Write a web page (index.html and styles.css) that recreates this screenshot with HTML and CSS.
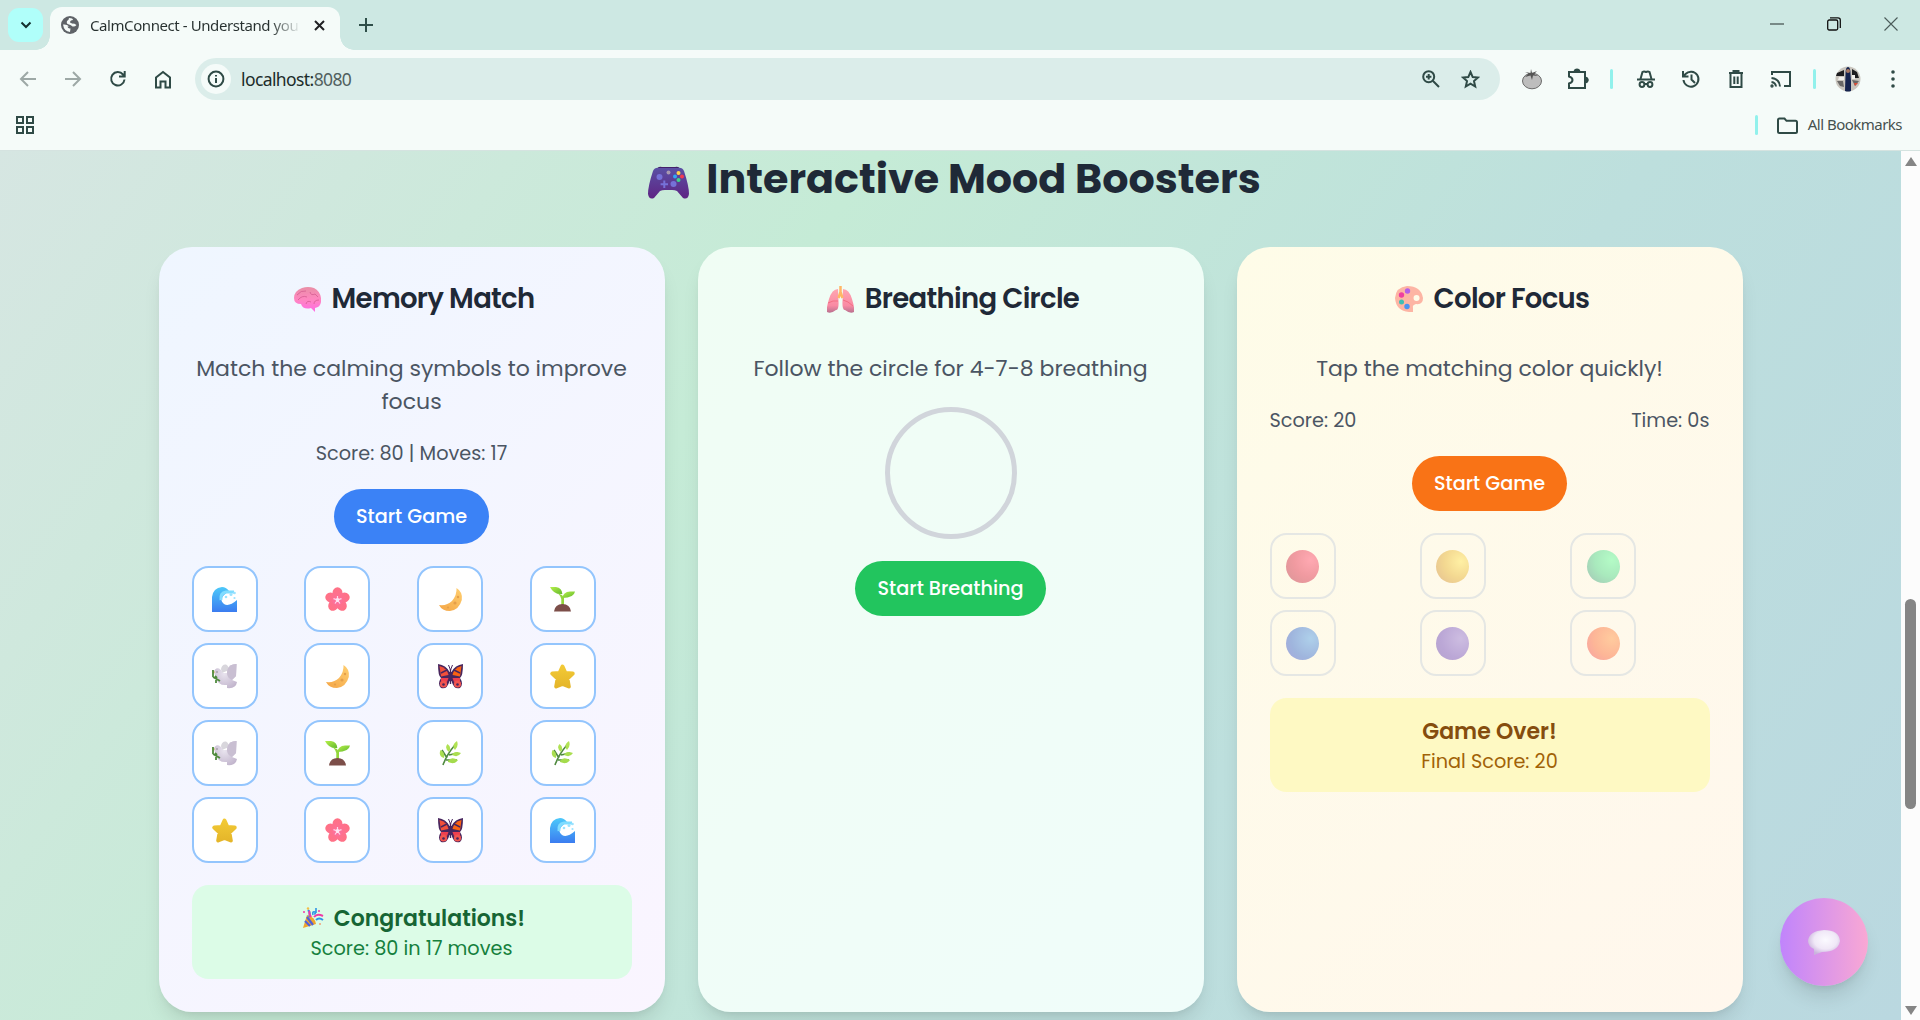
FILE: index.html
```html
<!DOCTYPE html>
<html lang="en">
<head>
<meta charset="utf-8">
<title>CalmConnect - Understand your mind</title>
<link rel="stylesheet" href="styles.css">
</head>
<body>
<svg class="defs" width="0" height="0" aria-hidden="true">
  <defs>
    <linearGradient id="gWave" x1="0" y1="0" x2="0" y2="1"><stop offset="0" stop-color="#4cc9fa"/><stop offset="1" stop-color="#3b7cf0"/></linearGradient>
    <linearGradient id="gFlower" gradientUnits="userSpaceOnUse" x1="0" y1="0" x2="0" y2="25"><stop offset="0" stop-color="#ff7184"/><stop offset="1" stop-color="#fb6fa8"/></linearGradient>
    <linearGradient id="gMoon" x1="1" y1="0" x2="0.2" y2="1"><stop offset="0" stop-color="#ffcf70"/><stop offset="1" stop-color="#f5a94a"/></linearGradient>
    <linearGradient id="gLeaf" x1="0" y1="0" x2="1" y2="1"><stop offset="0" stop-color="#b6f04b"/><stop offset="1" stop-color="#62b82c"/></linearGradient>
    <linearGradient id="gHerb" x1="0" y1="0" x2="0" y2="1"><stop offset="0" stop-color="#b4e455"/><stop offset="1" stop-color="#a3da4c"/></linearGradient>
    <radialGradient id="gDove" cx="0.45" cy="0.4" r="0.7"><stop offset="0" stop-color="#e9e4ef"/><stop offset="1" stop-color="#c0b3cb"/></radialGradient>
    <linearGradient id="gStar" x1="0" y1="0" x2="0" y2="1"><stop offset="0" stop-color="#f2c935"/><stop offset="1" stop-color="#e5b62a"/></linearGradient>
    <linearGradient id="gPad" x1="0" y1="0" x2="0" y2="1"><stop offset="0" stop-color="#5a50a4"/><stop offset="1" stop-color="#5f2484"/></linearGradient>
    <linearGradient id="gBrain" x1="0" y1="0" x2="0" y2="1"><stop offset="0" stop-color="#e98fa6"/><stop offset="0.5" stop-color="#ff86c0"/><stop offset="1" stop-color="#ff6ae6"/></linearGradient>
    <linearGradient id="gLung" x1="0" y1="0" x2="0" y2="1"><stop offset="0" stop-color="#ffa6b1"/><stop offset="0.7" stop-color="#f98aa3"/><stop offset="1" stop-color="#b9718f"/></linearGradient>
    <radialGradient id="gBubble" cx="0.55" cy="0.4" r="0.6"><stop offset="0" stop-color="#fbfaff"/><stop offset="0.6" stop-color="#f0e8f7"/><stop offset="1" stop-color="#c9b3dc"/></radialGradient>
    <symbol id="wave" viewBox="0 0 25 25"><path d="M0 25V10Q1 1 10 0Q14 0 17 4L12 8Q7 13 12 17Q17 20 25 13V25Z" fill="url(#gWave)"/><path d="M9 13Q8 6 14 5L22 5" fill="none" stroke="#7fdcff" stroke-width="3"/><g fill="#9ce3ff"><circle cx="19" cy="7.500" r="1.500"/><circle cx="22.500" cy="6" r="1.300"/><circle cx="22.500" cy="11" r="1.100"/><circle cx="14" cy="10" r="1.300"/></g></symbol>
    <symbol id="flower" viewBox="0 0 25 25"><g fill="url(#gFlower)"><ellipse cx="12.500" cy="6" rx="5" ry="5.800"/><ellipse cx="12.500" cy="6" rx="5" ry="5.800" transform="rotate(72 12.500 12.800)"/><ellipse cx="12.500" cy="6" rx="5" ry="5.800" transform="rotate(144 12.500 12.800)"/><ellipse cx="12.500" cy="6" rx="5" ry="5.800" transform="rotate(216 12.500 12.800)"/><ellipse cx="12.500" cy="6" rx="5" ry="5.800" transform="rotate(288 12.500 12.800)"/><circle cx="12.500" cy="13" r="5"/></g><path d="M12.500 9V13M8.500 11.600L12.500 13L10 16.500M16.500 11.600L12.500 13L15 16.500" stroke="#ffd9ef" stroke-width="1.200" fill="none"/><circle cx="12.500" cy="13" r="1.900" fill="#ffe4f4"/></symbol>
    <symbol id="moon" viewBox="0 0 25 25"><path d="M18.500 1Q25 5 23.800 13Q21 23 12 24Q4 24 1 18Q9 19 14 14Q19 8 18.500 1Z" fill="url(#gMoon)"/><g fill="#e59f4a"><circle cx="20" cy="10" r="1.200"/><circle cx="17" cy="16" r="1.600"/><circle cx="10" cy="20.500" r="1.100"/></g></symbol>
    <symbol id="sprout" viewBox="0 0 25 25"><path d="M11.300 19V12Q10 8 8 6.500L12 8L14 11V19Z" fill="#93d63a"/><path d="M0 0H6Q12 1 12.400 7Q4 8 0 0Z" fill="url(#gLeaf)"/><path d="M12.500 11Q13 5 20 4.500L25 4.600Q24 11 12.500 11Z" fill="url(#gLeaf)"/><path d="M4 24.500Q5 17 12.500 17Q20 17 21 24.500Z" fill="#7c4e49"/></symbol>
    <symbol id="dove" viewBox="0 0 25 25"><path d="M9 5Q10 0 14 .5Q17 2 17 6L10 9Z" fill="#d8d6dc"/><path d="M2 8Q3 3.500 7 4.500Q10 6 11 9L15 9Q15 2 21 .5L24.500 0L24 12L20 16L25 18Q24 25 15 24L15 21Q6 22 4 14Z" fill="url(#gDove)"/><path d="M15 9Q15 2 21 .5L24.500 0L24 12L20 16Q15 14 15 9Z" fill="#c9bfd2"/><path d="M0 6L3 8L1 10Z" fill="#eabf4e"/><path d="M1 6V13M1 13L8 17M3 12L5 14M4 16V19" stroke="#4f8b3d" stroke-width="1.800" fill="none"/><circle cx="5" cy="8" r=".7" fill="#777"/></symbol>
    <symbol id="butterfly" viewBox="0 0 25 25"><path d="M0 0Q8 1 11.500 8H13.500Q17 1 25 0Q25 12 22 14Q26 20 22 24Q16 26 13.500 17H11.500Q9 26 3 24Q-1 20 3 14Q0 12 0 0Z" fill="#48265e"/><path d="M1.500 2Q9 4 10.500 11L3 12.500Z" fill="#f2503a"/><path d="M23.500 2Q16 4 14.500 11L22 12.500Z" fill="#fb6312"/><path d="M3 14H10.500L9 18L3 17ZM22 14H14.500L16 18L22 17Z" fill="#ee3f4f"/><circle cx="5.500" cy="20" r="3.600" fill="#f2554f"/><circle cx="19.500" cy="20" r="3.600" fill="#f2554f"/><circle cx="5.500" cy="20.500" r="1.300" fill="#48265e"/><circle cx="19.500" cy="20.500" r="1.300" fill="#48265e"/><path d="M3 9L9 6M22 9L16 6M12.500 5V20" stroke="#48265e" stroke-width="1.400"/><path d="M10.500 1L12.500 6L14.500 1" stroke="#48265e" stroke-width="1" fill="none"/></symbol>
    <symbol id="star" viewBox="0 0 25 25"><path d="M12.500 2.500L15.400 9L22.700 9.600L17.400 14.600L18.800 22.500L12.500 20L6.200 22.500L7.600 14.600L2.300 9.600L9.600 9Z" fill="url(#gStar)" stroke="url(#gStar)" stroke-width="4" stroke-linejoin="round"/></symbol>
    <symbol id="herb" viewBox="0 0 25 25"><path d="M5 24Q9 13 17 4M9 17L4 9M8 19H19M11 14L20 12" stroke="#4f8a3f" stroke-width="1.600" fill="none"/><path d="M17 9Q13 4 19 0Q21 5 17 9ZM11 11Q6 7 9.500 3Q14 6 11 11ZM6 17Q0 15 2.500 9Q7 11 6 17ZM14 14Q16 9 23 12Q20 17 14 14ZM10 20Q13 15 20 19Q17 24 10 21Z" fill="url(#gHerb)"/></symbol>
    <symbol id="party" viewBox="0 0 22 22"><path d="M1 21L5 8Q13 10 14 17Z" fill="#f0a52c"/><path d="M3 14L8 19M5 10L11 18" stroke="#5260d8" stroke-width="2.200"/><path d="M7 10Q9 6 6 3M14 13Q17 10 21 13" fill="none" stroke="#2f95e6" stroke-width="2"/><path d="M9 10Q6 5 8 4M12 10Q15 6 21 9" fill="none" stroke="#f03ca7" stroke-width="2"/><path d="M11 8Q10 4 13 5Q14 7 12 7M14 6V1" fill="none" stroke="#2f95e6" stroke-width="1.600"/><circle cx="6" cy="1.500" r="1.200" fill="#f5bd45"/><circle cx="2" cy="5" r="1" fill="#f03ca7"/><circle cx="17" cy="4" r="1" fill="#f03ca7"/><circle cx="18" cy="17" r="1" fill="#f2a07b"/></symbol>
    <symbol id="gamepad" viewBox="0 0 41 33"><path d="M9 3Q10 0 14 1H27Q31 0 32 3Z" fill="#43206b"/><path d="M5 5Q7 1 11 2H30Q34 1 36 5Q41 20 41 28Q40 34 35 32L29 25Q27 24 24 24H17Q14 24 12 25L6 32Q1 34 0 28Q0 20 5 5Z" fill="url(#gPad)"/><g fill="#7671d8"><circle cx="11.500" cy="11" r="3"/><circle cx="25.500" cy="18" r="3"/><path d="M15.300 14.500H17.300V17.200H20V19.200H17.300V22H15.300V19.200H12.600V17.200H15.300Z"/></g><circle cx="20.500" cy="6.500" r="2" fill="#a99ab0"/><circle cx="30.500" cy="7" r="2" fill="#ffd34a"/><circle cx="34" cy="10.500" r="2" fill="#f63a50"/><circle cx="27" cy="10.500" r="2" fill="#2fa8f5"/><circle cx="30.500" cy="14" r="2" fill="#3ed68c"/></symbol>
    <symbol id="brain" viewBox="0 0 27 25"><path d="M8 1Q14-1 20 1Q26 4 27 11Q28 20 21 21L21 25L17 21Q9 23 7 17Q0 17 0 11Q0 4 8 1Z" fill="url(#gBrain)"/><path d="M3 8Q7 3 12 4M4 13Q8 8 13 10M12 17Q13 13 17 15M16 5Q17 9 21 7L24 10M20 17Q20 13 25 13" stroke="#d0568d" stroke-width=".7" fill="none"/></symbol>
    <symbol id="lungs" viewBox="0 0 27 28"><path d="M11 4Q5 4 2 14Q-1 24 0 27Q4 29 9 25Q12 25 11.500 16ZM16 4Q22 4 25 14Q28 24 27 27Q23 29 18 25Q15 25 15.500 16Z" fill="url(#gLung)"/><path d="M1 18Q6 15 11 16M16 15Q21 16 26 21" fill="none" stroke="#f36e83" stroke-width="1"/><path d="M13.500 1V10M13.500 7L11.500 13M13.500 7L15.500 13" stroke="#ffb765" stroke-width="2.500" fill="none"/></symbol>
    <symbol id="palette" viewBox="0 0 28 26"><path d="M12 0Q26 0 28 12Q28 19 21 18Q17 19 18 22V26H14Q1 25 0 12Q1 1 12 0ZM21.500 9A3 3 0 1 0 21.600 15A3 3 0 1 0 21.500 9Z" fill="#fdb5a4" fill-rule="evenodd"/><circle cx="12.500" cy="5" r="2.700" fill="#b45ee8"/><circle cx="6.500" cy="9" r="2.700" fill="#ef3fa0"/><circle cx="6.500" cy="16" r="2.500" fill="#3fbfb5"/><circle cx="12" cy="20.500" r="2.700" fill="#4a93f2"/></symbol>
    <symbol id="bubble" viewBox="0 0 32 25"><path d="M16 0Q31 0 32 11Q30 22 14 22L6 25V19Q0 16 0 11Q1 1 16 0Z" fill="url(#gBubble)"/></symbol>
  </defs>
</svg>

<header class="browser">
  <div class="tabstrip">
    <div class="tab-search"><svg width="12" height="8" viewBox="0 0 12 8"><path d="M1.500 1.500L6 6L10.500 1.500" fill="none" stroke="#12302d" stroke-width="2"/></svg></div>
    <div class="tab">
      <svg class="favicon" width="18" height="18" viewBox="0 0 18 18"><circle cx="9" cy="9" r="9" fill="#5f6368"/><path d="M2 8.500Q6 8 8 10.500H6.500Q7 13 9.500 12.500L9 16Q3 15.500 2 8.500ZM8 2Q12 2 12 4Q9 4 9 6.500Q11 8 13 7.500L15.500 9Q14 11 11.500 10.500Q10 9 8 8.500Q5 8 6 5Q8 4 8 2Z" fill="#f5fbf9"/></svg>
      <span class="tab-title">CalmConnect - Understand you</span>
      <svg class="tab-close" width="11" height="11" viewBox="0 0 11 11"><path d="M1 1L10 10M10 1L1 10" stroke="#202124" stroke-width="2"/></svg>
    </div>
    <svg class="new-tab" width="14" height="14" viewBox="0 0 14 14"><path d="M7 0V14M0 7H14" stroke="#2f4f4a" stroke-width="2"/></svg>
    <div class="window-controls">
      <svg width="14" height="14" viewBox="0 0 14 14"><path d="M0 7H14" stroke="#5b6b69" stroke-width="1.500"/></svg>
      <svg width="14" height="14" viewBox="0 0 14 14" fill="none" stroke="#111" stroke-width="1.300"><rect x=".7" y="3" width="10" height="10" rx="1.500"/><path d="M3 .8H11Q13.300 .8 13.300 3V11"/></svg>
      <svg width="14" height="14" viewBox="0 0 14 14"><path d="M.5 .5L13.500 13.500M13.500 .5L.5 13.500" stroke="#4b5b59" stroke-width="1.100"/></svg>
    </div>
  </div>
  <div class="toolbar">
    <nav class="nav">
      <svg class="dim" width="18" height="18" viewBox="0 0 18 18"><path d="M17 9H3M9 2L2 9L9 16"/></svg>
      <svg class="dim" width="18" height="18" viewBox="0 0 18 18"><path d="M1 9H15M9 2L16 9L9 16"/></svg>
      <svg width="18" height="18" viewBox="0 0 18 18"><path d="M15.500 9.500A6.700 6.700 0 1 1 14 4.500L15.500 6M15.700 1V6.600H10"/></svg>
      <svg width="18" height="19" viewBox="0 0 18 19"><path d="M2 7.500L9 2L16 7.500V17.500H11.500V11.500H6.500V17.500H2Z"/></svg>
    </nav>
    <div class="omnibox">
      <div class="site-info"><svg width="18" height="18" viewBox="0 0 18 18"><circle cx="9" cy="9" r="7.400"/><path d="M9 8V13M9 5V6.600"/></svg></div>
      <span class="url">localhost:<span class="port">8080</span></span>
      <svg class="zoomed" width="18" height="18" viewBox="0 0 18 18"><circle cx="6.700" cy="6.700" r="5.500"/><path d="M10.800 10.800L17 17M6.700 4V9.400M4 6.700H9.400"/></svg>
      <svg class="bookmark" width="19" height="19" viewBox="0 0 19 19"><path d="M9.500 2L11.700 7.100L17 7.500L13 11.100L14.200 16.500L9.500 13.600L4.800 16.500L6 11.100L2 7.500L7.300 7.100Z"/></svg>
    </div>
    <div class="actions">
      <svg class="tomato" width="22" height="22" viewBox="0 0 22 22"><ellipse cx="11" cy="13" rx="9.500" ry="7.800" fill="#bdbdbd" stroke="#6b6b6b"/><path d="M10 1L11 5L16 3L13 6L17 8L12 7.500L11 12L9.500 7.500L4 9L7.500 5.500L4 4L9.500 5Z" fill="#555"/></svg>
      <svg class="puzzle" width="22" height="22" viewBox="0 0 22 22"><path d="M2 4H7.500Q8 2 10 2T12.500 4H18V9.500Q20.500 10 20.500 12T18 14.500V20H2V15.500Q5.500 14.500 5.500 12T2 8.500Z"/><path class="solid" d="M7.500 4Q8 1.500 10 1.500T12.500 4ZM18 9.500Q20.500 10 20.500 12T18 14.500Z"/></svg>
      <i class="divider"></i>
      <svg class="incognito" width="20" height="20" viewBox="0 0 20 20"><path d="M1 10.500H19M4.500 10L6.500 3Q8 2 10 3Q12 2 13.500 3L15.500 10"/><circle cx="6" cy="15.500" r="2.400"/><circle cx="14" cy="15.500" r="2.400"/><path d="M8.500 15H11.500"/></svg>
      <svg class="action" width="20" height="20" viewBox="0 0 20 20"><path d="M2.500 11A7.500 7.500 0 1 0 4.500 5L2.500 7M2 2V7.500H7.500M10.500 5.500V10.500L14 14"/></svg>
      <svg class="action" width="20" height="20" viewBox="0 0 20 20"><path d="M3 4H17M7.500 3.500V2H12.500V3.500M4.500 4V18H15.500V4M8.300 7.500V15M11.700 7.500V15"/></svg>
      <svg class="cast" width="22" height="20" viewBox="0 0 22 20"><path d="M2 6V3H20V17H14M1.500 9Q9.500 10 10 17.500M1.500 13Q5.500 13.500 6 17.500"/><circle cx="2" cy="17" r=".7"/></svg>
      <i class="divider second"></i>
      <svg class="avatar" width="26" height="26" viewBox="0 0 26 26"><circle cx="13" cy="13" r="12.500" fill="#c9c5be"/><path d="M2 7L9 4V10H1ZM17 3L22 6L24 12H17Z" fill="#1d1d20"/><path d="M2 15H8L9 21L5 20ZM17 14L24 15L20 20Z" fill="#696766"/><path d="M4 11H9V14H3ZM17 9H20V13H17Z" fill="#f1efec"/><path d="M10.500 8Q10.500 1 13 1T15.500 8L16 15L16 25Q13 26 10 25Z" fill="#15234e"/><circle cx="13" cy="5" r="2" fill="#a97862"/><path d="M19 17H23L20 20Z" fill="#da4b36"/></svg>
      <svg class="kebab" width="6" height="20" viewBox="0 0 6 20"><circle cx="3" cy="3" r="1.800"/><circle cx="3" cy="10" r="1.800"/><circle cx="3" cy="17" r="1.800"/></svg>
    </div>
  </div>
  <div class="bookmarks">
    <svg class="apps" width="18" height="18" viewBox="0 0 18 18"><path d="M1 1H7V7H1ZM11 1H17V7H11ZM1 11H7V17H1ZM11 11H17V17H11Z"/></svg>
    <i class="divider"></i>
    <svg class="folder" width="21" height="17" viewBox="0 0 21 17"><path d="M1 3Q1 1.500 2.500 1.500H7.500L9.500 3.800H18.500Q20 3.800 20 5.300V14.500Q20 16 18.500 16H2.500Q1 16 1 14.500Z"/></svg>
    <span class="all">All Bookmarks</span>
  </div>
</header>

<div class="viewport">
  <main class="page">
    <h2 class="heading"><svg width="41" height="33"><use href="#gamepad"/></svg>Interactive Mood Boosters</h2>
    <div class="cards">
      <section class="card memory">
        <h3><svg width="27" height="25"><use href="#brain"/></svg>Memory Match</h3>
        <p class="lead">Match the calming symbols to improve focus</p>
        <p class="stat">Score: 80 | Moves: 17</p>
        <button class="btn blue">Start Game</button>
        <div class="tiles">
          <div class="tile"><svg><use href="#wave"/></svg></div><div class="tile"><svg><use href="#flower"/></svg></div><div class="tile"><svg><use href="#moon"/></svg></div><div class="tile"><svg><use href="#sprout"/></svg></div>
          <div class="tile"><svg><use href="#dove"/></svg></div><div class="tile"><svg><use href="#moon"/></svg></div><div class="tile"><svg><use href="#butterfly"/></svg></div><div class="tile"><svg><use href="#star"/></svg></div>
          <div class="tile"><svg><use href="#dove"/></svg></div><div class="tile"><svg><use href="#sprout"/></svg></div><div class="tile"><svg><use href="#herb"/></svg></div><div class="tile"><svg><use href="#herb"/></svg></div>
          <div class="tile"><svg><use href="#star"/></svg></div><div class="tile"><svg><use href="#flower"/></svg></div><div class="tile"><svg><use href="#butterfly"/></svg></div><div class="tile"><svg><use href="#wave"/></svg></div>
        </div>
        <div class="result green-box">
          <p class="strong"><svg width="22" height="22"><use href="#party"/></svg>Congratulations!</p>
          <p class="detail">Score: 80 in 17 moves</p>
        </div>
      </section>
      <section class="card breathing">
        <h3><svg width="27" height="28"><use href="#lungs"/></svg>Breathing Circle</h3>
        <p class="lead">Follow the circle for 4-7-8 breathing</p>
        <div class="circle"></div>
        <button class="btn green">Start Breathing</button>
      </section>
      <section class="card color">
        <h3><svg width="28" height="26"><use href="#palette"/></svg>Color Focus</h3>
        <p class="lead">Tap the matching color quickly!</p>
        <div class="stat split"><span>Score: 20</span><span>Time: 0s</span></div>
        <button class="btn orange">Start Game</button>
        <div class="tiles three">
          <div class="tile off"><i class="ball red"></i></div><div class="tile off"><i class="ball yellow"></i></div><div class="tile off"><i class="ball mint"></i></div>
          <div class="tile off"><i class="ball sky"></i></div><div class="tile off"><i class="ball violet"></i></div><div class="tile off"><i class="ball peach"></i></div>
        </div>
        <div class="result yellow-box">
          <p class="strong">Game Over!</p>
          <p class="detail">Final Score: 20</p>
        </div>
      </section>
    </div>
    <button class="chat" aria-label="Open chat"><svg width="32" height="25"><use href="#bubble"/></svg></button>
  </main>
  <div class="scrollbar">
    <svg width="12" height="9" viewBox="0 0 12 9"><path d="M6 0L12 9H0Z" fill="#858585"/></svg>
    <i class="thumb"></i>
    <svg width="12" height="9" viewBox="0 0 12 9"><path d="M0 0H12L6 9Z" fill="#858585"/></svg>
  </div>
</div>
</body>
</html>
```
FILE: styles.css
```css
* { box-sizing: border-box; margin: 0; padding: 0; }
html { font-size: 22px; }
body { width: 1920px; height: 1020px; overflow: hidden; display: flex; flex-direction: column; font-family: "Poppins", "Inter", sans-serif; color: #4b5563; }
svg { display: block; flex: none; }
i { display: block; flex: none; }
.defs { position: absolute; }

/* Browser frame */
.browser { height: 151px; flex: none; background: #f5fbf9; border-bottom: 1px solid #d5e3e0; font-family: "Segoe UI", "Noto Sans", sans-serif; }
.tabstrip { height: 50px; background: #cde8e3; display: flex; align-items: flex-start; }
.tab-search { width: 35px; height: 34px; margin: 8px 0 0 8px; border-radius: 11px; background: #b0fffa; display: grid; place-items: center; }
.tab { position: relative; width: 290px; height: 43px; margin: 7px 0 0 7px; padding: 0 15px 7px 11px; border-radius: 12px 12px 0 0; background: #f5fbf9; display: flex; align-items: center; }
.tab::before, .tab::after { content: ""; position: absolute; bottom: 0; width: 14px; height: 14px; }
.tab::before { left: -14px; background: radial-gradient(circle at 0 0, transparent 13.5px, #f5fbf9 14px); }
.tab::after { right: -14px; background: radial-gradient(circle at 100% 0, transparent 13.5px, #f5fbf9 14px); }
.tab-title { margin: 0 0 1px 11px; white-space: nowrap; font-size: 15px; letter-spacing: -0.42px; color: transparent; background: linear-gradient(90deg, #27302f 180px, #dfe6e4 208px); -webkit-background-clip: text; background-clip: text; }
.tab-close { margin-left: auto; }
.new-tab { margin: 18px 0 0 19px; }
.window-controls { margin: 17px 22px 0 auto; display: flex; gap: 43px; }
.toolbar { height: 58px; display: flex; align-items: center; background: #f5fbf9; }
.toolbar svg, .bookmarks svg { fill: none; stroke: #2f4a46; stroke-width: 2; }
.nav { width: 195px; padding-left: 18.500px; display: flex; align-items: center; gap: 27px; }
.nav .dim { stroke: #9da8a6; }
.omnibox { width: 1305px; height: 42px; padding: 0 20px 0 6px; border-radius: 21px; background: #dbedea; display: flex; align-items: center; }
.site-info { width: 30px; height: 30px; border-radius: 50%; background: #f5fbf9; display: grid; place-items: center; }
.url { margin-left: 10px; font-size: 17.500px; letter-spacing: -0.6px; color: #1c2b29; }
.port { color: #51615f; }
.zoomed { margin-left: auto; }
.bookmark { margin-left: 21.500px; }
.actions { padding-left: 21px; display: flex; align-items: center; }
.actions .tomato { stroke-width: 1; stroke: none; }
.puzzle { margin-left: 24px; }
.puzzle .solid { fill: #2f4a46; }
.divider { width: 3px; height: 20px; border-radius: 2px; background: #92f1ec; }
.actions .divider { margin-left: 21px; }
.incognito { margin-left: 22.500px; }
.action { margin-left: 25px; }
.cast { margin-left: 24px; }
.actions .second { margin-left: 21px; }
.actions .avatar { margin-left: 19px; stroke: none; }
.actions .kebab { margin-left: 29px; fill: #2f4a46; stroke: none; }
.bookmarks { height: 42px; padding: 0 18px 8px 15.500px; display: flex; align-items: center; }
.bookmarks .divider { margin-left: auto; }
.folder { margin: 0 10px 0 19px; }
.all { font-size: 15px; letter-spacing: -0.52px; margin-bottom: 2px; color: #46514f; }

/* Page */
.viewport { height: 869px; display: flex; }
.page { position: relative; width: 1901px; padding: 2.500px 158.500px 0; overflow: hidden; background: linear-gradient(125deg, #d6e6e2 0%, #c5ebd6 35%, #bddfdd 66%, #bad8e0 100%); }
.heading { height: 49.500px; line-height: 49.500px; margin-bottom: 44px; display: flex; justify-content: center; align-items: center; gap: 17px; font-size: 41.250px; font-weight: 700; color: #1f2937; white-space: nowrap; }
.heading svg { margin: 9px 0 0 8px; }
.cards { display: grid; grid-template-columns: repeat(3, 506px); gap: 33px; }
.card { height: 765px; padding: 33px; border-radius: 33px; display: flex; flex-direction: column; align-items: center; gap: 22px; box-shadow: 0 14px 20px -4px rgba(0,0,0,.1), 0 5px 8px -5px rgba(0,0,0,.1); }
.memory { background: linear-gradient(135deg, #eff6ff, #faf5ff); }
.breathing { background: linear-gradient(135deg, #f0fdf4, #f0fdfa); }
.color { background: linear-gradient(135deg, #fefce8, #fff7ed); }
.card h3 { height: 38.500px; margin-bottom: 11px; display: flex; align-items: center; gap: 11px; font-size: 27.500px; font-weight: 600; letter-spacing: -0.025em; color: #1f2937; white-space: nowrap; }
.card h3 svg { margin-left: 5px; }
.lead { width: 440px; text-align: center; font-size: 22px; line-height: 33px; }
.stat { font-size: 19.250px; line-height: 27.500px; }
.split { width: 440px; display: flex; justify-content: space-between; }
.btn { height: 55px; padding: 0 22px; border: 0; border-radius: 28px; font: inherit; font-size: 19.250px; font-weight: 500; color: #fff; white-space: nowrap; }
.blue { background: #3b82f6; }
.green { background: #22c55e; }
.orange { background: #f97316; }
.tiles { width: 440px; display: grid; grid-template-columns: repeat(4, 1fr); gap: 11px; }
.three { grid-template-columns: repeat(3, 1fr); }
.tile { width: 66px; height: 66px; border: 2px solid #93c5fd; border-radius: 16.500px; background: #fff; display: grid; place-items: center; }
.tile svg { width: 25px; height: 25px; }
.tile.off { background: transparent; border-color: #e5e7e4; }
.ball { width: 33px; height: 33px; border-radius: 50%; }
.red { background: radial-gradient(circle at 75% 30%, #ffa9b2, #f09aa0 50%, #d99597); }
.yellow { background: radial-gradient(circle at 75% 35%, #fff0a4, #f3d891 50%, #e4bf91); }
.mint { background: radial-gradient(circle at 75% 30%, #b4fbc6, #a9e9bd 50%, #a3c4b5); }
.sky { background: radial-gradient(circle at 75% 35%, #aed0ea, #9fb5dd 60%, #a6a7dc); }
.violet { background: radial-gradient(circle at 75% 35%, #cdbde1, #bba7d6 60%, #b5a2ce); }
.peach { background: radial-gradient(circle at 75% 35%, #ffcb9e, #fdb697 55%, #f7a0a3); }
.circle { width: 132px; height: 132px; border: 5px solid #d1d5db; border-radius: 50%; }
.result { width: 440px; height: 93.500px; padding: 16.500px 0; border-radius: 16.500px; text-align: center; }
.strong { display: flex; justify-content: center; align-items: center; gap: 10px; font-size: 22px; line-height: 33px; font-weight: 600; }
.strong svg { margin-left: 4px; }
.detail { font-size: 19.250px; line-height: 27.500px; }
.green-box { background: #dcfce7; color: #15803d; }
.green-box .strong { color: #166534; }
.yellow-box { background: #fef9c3; color: #a16207; }
.yellow-box .strong { color: #854d0e; }
.chat { position: absolute; right: 33px; bottom: 34px; width: 88px; height: 88px; border: 0; border-radius: 50%; background: linear-gradient(90deg, #c084fc, #f9a8d4); box-shadow: 0 14px 20px -4px rgba(0,0,0,.12), 0 5px 8px -5px rgba(0,0,0,.12); display: grid; place-items: center; }
.scrollbar { width: 19px; padding: 6px 0 5px; background: #fcfcfc; display: flex; flex-direction: column; align-items: center; }
.thumb { width: 11px; height: 210px; margin: 433px 0 auto; border-radius: 6px; background: #858585; }
```
